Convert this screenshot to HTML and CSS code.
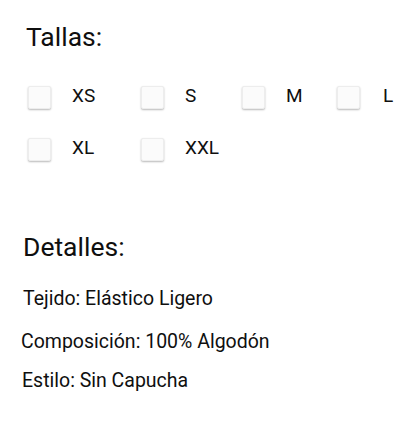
FILE: index.html
```html
<!DOCTYPE html>
<html lang="es">
<head>
<meta charset="utf-8">
<link rel="stylesheet" href="styles.css">
</head>
<body>
<h2 class="title title-sizes">Tallas:</h2>
<div class="sizes">
  <label class="opt"><span class="box"></span><span class="lbl">XS</span></label>
  <label class="opt"><span class="box"></span><span class="lbl">S</span></label>
  <label class="opt"><span class="box"></span><span class="lbl">M</span></label>
  <label class="opt"><span class="box"></span><span class="lbl lbl-l">L</span></label>
  <label class="opt"><span class="box"></span><span class="lbl">XL</span></label>
  <label class="opt"><span class="box"></span><span class="lbl">XXL</span></label>
</div>
<h2 class="title title-details">Detalles:</h2>
<p class="detail d1">Tejido: Elástico Ligero</p>
<p class="detail d2">Composición: 100% Algodón</p>
<p class="detail d3">Estilo: Sin Capucha</p>
</body>
</html>
```
FILE: styles.css
```css
html, body {
  margin: 0;
  padding: 0;
  background: #ffffff;
}
body {
  font-family: Roboto, "Liberation Sans", sans-serif;
  color: #0f0f0f;
  width: 420px;
  height: 429px;
  overflow: hidden;
}
.title {
  font-size: 26.5px;
  font-weight: 400;
  line-height: 30px;
  margin: 0;
  color: #0f0f0f;
}
.title-sizes {
  margin: 22px 0 0 26px;
}
.sizes {
  display: grid;
  grid-template-columns: 113px 101px 95px auto;
  row-gap: 29px;
  margin: 34px 0 0 28px;
}
.opt {
  display: flex;
  align-items: center;
  height: 23px;
}
.box {
  width: 23px;
  height: 23px;
  box-sizing: border-box;
  background: #fbfbfb;
  border: 1px solid #ededed;
  border-radius: 2px;
  box-shadow: 0 1px 2px rgba(0, 0, 0, 0.28);
  margin-right: 21px;
  flex: none;
}
.lbl {
  font-size: 19px;
  line-height: 22px;
  margin-top: -4px;
}
.lbl-l {
  margin-left: 2px;
}
.title-details {
  margin: 71px 0 0 23px;
}
.detail {
  font-size: 19.5px;
  line-height: 22px;
  margin: 0;
}
.d1 {
  margin: 26px 0 0 23px;
}
.d2 {
  margin: 21px 0 0 21px;
}
.d3 {
  margin: 17px 0 0 22px;
}
```
